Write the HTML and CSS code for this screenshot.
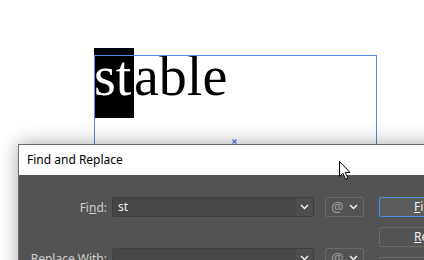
FILE: index.html
```html
<!DOCTYPE html>
<html lang="en">
<head>
    <meta charset="UTF-8">
    <title>Find and Replace</title>
    <link rel="stylesheet" href="styles.css">
</head>
<body>
    <!-- artboard -->
    <div class="canvas">
        <div class="frame">
            <div class="word"><span class="sel">st</span>able</div>
            <svg class="center-mark" width="5" height="5" viewBox="0 0 5 5">
                <path d="M0.5 0.5 L4.5 4.5 M4.5 0.5 L0.5 4.5" stroke="#4f7df0" stroke-width="1.2"/>
            </svg>
        </div>
    </div>

    <!-- dialog -->
    <div class="dialog">
        <div class="titlebar">Find and Replace</div>
        <div class="dlg-body">
            <div class="fields">
                <div class="row">
                    <label class="lbl">Fi<u>n</u>d:</label>
                    <div class="combo">
                        <span class="combo-text">st</span>
                        <span class="combo-arrow">
                            <svg width="9" height="6" viewBox="0 0 9 6"><path d="M1 1 L4.5 4.5 L8 1" fill="none" stroke="#f0f0f0" stroke-width="1.5"/></svg>
                        </span>
                    </div>
                    <div class="at-btn">
                        <span class="at">@</span>
                        <svg width="9" height="6" viewBox="0 0 9 6"><path d="M1 1 L4.5 4.5 L8 1" fill="none" stroke="#f0f0f0" stroke-width="1.5"/></svg>
                    </div>
                </div>
                <div class="row">
                    <label class="lbl">Replace With:</label>
                    <div class="combo">
                        <span class="combo-text"></span>
                        <span class="combo-arrow">
                            <svg width="9" height="6" viewBox="0 0 9 6"><path d="M1 1 L4.5 4.5 L8 1" fill="none" stroke="#f0f0f0" stroke-width="1.5"/></svg>
                        </span>
                    </div>
                    <div class="at-btn">
                        <span class="at">@</span>
                        <svg width="9" height="6" viewBox="0 0 9 6"><path d="M1 1 L4.5 4.5 L8 1" fill="none" stroke="#f0f0f0" stroke-width="1.5"/></svg>
                    </div>
                </div>
            </div>
            <div class="buttons">
                <button class="btn primary"><u>F</u>ind</button>
                <button class="btn"><u>R</u>eplace</button>
                <button class="btn">Replace &amp; Find</button>
            </div>
        </div>
    </div>

    <svg class="cursor" width="13" height="20" viewBox="0 0 13 20">
        <path d="M0.5 0.5 L0.5 15.5 L4 12.3 L6.6 18.3 L8.8 17.3 L6.3 11.4 L11 11.4 Z" fill="#fff" stroke="#000" stroke-width="1"/>
    </svg>
</body>
</html>
```

FILE: styles.css
```css
html, body {
    margin: 0;
    height: 100%;
    overflow: hidden;
    background: #fff;
}

body {
    position: relative;
    font-family: "Noto Sans", "Open Sans", sans-serif;
}

.canvas {
    height: 144px;
    box-sizing: border-box;
    padding: 55px 0 0 94px;
}

.frame {
    position: relative;
    display: flow-root;
    width: 283px;
    height: 200px;
}

.frame::after {
    content: "";
    position: absolute;
    top: 0;
    left: 0;
    right: 0;
    bottom: 0;
    border: 1px solid #5a85ee;
}

.word {
    margin-top: -7px;
    font-family: "Liberation Serif", serif;
    font-size: 56px;
    line-height: 55px;
    white-space: nowrap;
    color: #000;
}

.sel {
    display: inline-block;
    width: 40px;
    padding: 1px 0 14px;
    background: #000;
    color: #fff;
    line-height: 55px;
}

.center-mark {
    position: absolute;
    left: 138px;
    top: 84px;
}

.dialog {
    position: relative;
    z-index: 1;
    margin-left: 18px;
    width: 440px;
    border: 1px solid #6a6a6a;
    background: #535353;
    box-shadow: 0 0 18px rgba(0, 0, 0, 0.35);
}

.titlebar {
    height: 30px;
    line-height: 30px;
    padding-left: 8px;
    background: #fff;
    color: #000;
    font-size: 12px;
}

.dlg-body {
    display: flex;
    padding-top: 22px;
    height: 200px;
}

.fields {
    display: flex;
    flex-direction: column;
    gap: 31px;
    margin-right: 15px;
}

.row {
    display: flex;
    align-items: center;
    height: 20px;
}

.lbl {
    width: 88px;
    margin-right: 5px;
    text-align: right;
    color: #cfcfcf;
    font-size: 12px;
}

.combo {
    display: flex;
    width: 202px;
    height: 20px;
    box-sizing: border-box;
    border: 1px solid #3f3f3f;
    border-radius: 2px;
    margin-right: 11px;
}

.combo-text {
    flex: 1;
    background: #464646;
    color: #f2f2f2;
    font-size: 12px;
    line-height: 18px;
    padding-left: 5px;
}

.combo-arrow {
    width: 17px;
    display: flex;
    align-items: center;
    justify-content: center;
    border-left: 1px solid #444;
    background: #4e4e4e;
}

.at-btn {
    display: flex;
    align-items: center;
    justify-content: space-between;
    width: 39px;
    height: 20px;
    box-sizing: border-box;
    padding: 0 5px 0 5px;
    border: 1px solid #6a6a6a;
    border-radius: 2px;
}

.at {
    color: #9c9c9c;
    font-size: 14px;
    line-height: 18px;
}

.buttons {
    display: flex;
    flex-direction: column;
    gap: 10px;
}

.btn {
    width: 90px;
    height: 20px;
    padding: 0 0 0 34px;
    text-align: left;
    border: 1px solid #6b6b6b;
    border-radius: 2px;
    background: #535353;
    color: #f0f0f0;
    font-family: "Noto Sans", "Open Sans", sans-serif;
    font-size: 12px;
    line-height: 18px;
    white-space: nowrap;
}

.btn.primary {
    border-color: #4d8fe8;
    background: #5b5b5b;
}

.cursor {
    position: absolute;
    left: 339px;
    top: 161px;
    z-index: 2;
}
```
